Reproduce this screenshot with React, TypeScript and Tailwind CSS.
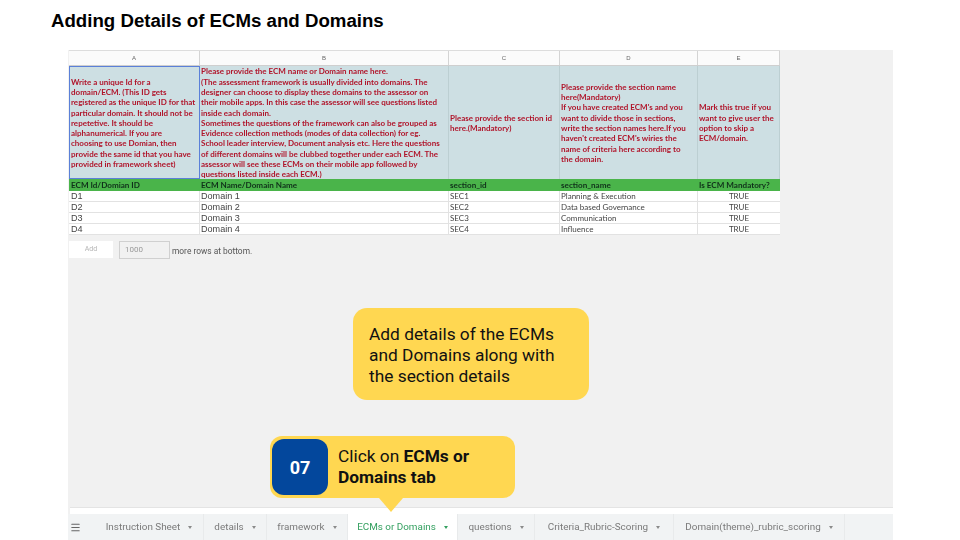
import React from 'react';
import { Menu } from 'lucide-react';

const columns = [
    { letter: 'A', width: 'w-[131px]' },
    { letter: 'B', width: 'w-[249px]' },
    { letter: 'C', width: 'w-[111px]' },
    { letter: 'D', width: 'w-[138px]' },
    { letter: 'E', width: 'w-[82px]' },
];

const notes = [
    ['Write a unique Id for a', 'domain/ECM. (This ID gets', 'registered as the unique ID for that', 'particular domain. It should not be', 'repetetive. It should be', 'alphanumerical. If you are', 'choosing to use Domian, then', 'provide the same id that you have', 'provided in framework sheet)'],
    ['Please provide the ECM name or Domain name here.', '(The assessment framework is usually divided into domains. The', 'designer can choose to display these domains to the assessor on', 'their mobile apps. In this case the assessor will see questions listed', 'inside each domain.', 'Sometimes the questions of the framework can also be grouped as', 'Evidence collection methods (modes of data collection) for eg.', 'School leader interview, Document analysis etc. Here the questions', 'of different domains will be clubbed together under each ECM. The', 'assessor will see these ECMs on their mobile app followed by', 'questions listed inside each ECM.)'],
    ['Please provide the section id', 'here.(Mandatory)'],
    ['Please provide the section name', 'here(Mandatory)', "If you have created ECM's and you", 'want to divide those in sections,', 'write the section names here.If you', "haven't created ECM's wiries the", 'name of criteria here according to', 'the domain.'],
    ['Mark this true if you', 'want to give user the', 'option to skip a', 'ECM/domain.'],
];

const headers = ['ECM Id/Domian ID', 'ECM Name/Domain Name', 'section_id', 'section_name', 'Is ECM Mandatory?'];

const rows = [
    ['D1', 'Domain 1', 'SEC1', 'Planning & Execution'],
    ['D2', 'Domain 2', 'SEC2', 'Data based Governance'],
    ['D3', 'Domain 3', 'SEC3', 'Communication'],
    ['D4', 'Domain 4', 'SEC4', 'Influence'],
];

const tabs = [
    { name: 'Instruction Sheet', width: 'w-[109px]' },
    { name: 'details', width: 'w-[63px]' },
    { name: 'framework', width: 'w-[81px]' },
    { name: 'ECMs or Domains', width: 'w-[110px]', active: true },
    { name: 'questions', width: 'w-[77px]' },
    { name: 'Criteria_Rubric-Scoring', width: 'w-[139px]' },
    { name: 'Domain(theme)_rubric_scoring', width: 'w-[171px]' },
];

const Sheet: React.FC = () => (
    <div className="w-[711px] ml-px blur-[0.4px] font-['Lato',sans-serif]">
        {/* Column letters */}
        <div className="flex h-[16px] bg-[#fbfbfb] border-t border-[#dddddd] border-b border-b-[#cfcfcf]">
            {columns.map((c) => (
                <div key={c.letter} className={`${c.width} border-r border-[#d4d4d4] flex items-center justify-center text-[6px] text-[#666666] font-['Liberation_Sans',sans-serif]`}>
                    {c.letter}
                </div>
            ))}
        </div>

        {/* Instruction row */}
        <div className="flex h-[113px] bg-[#cddfe3]">
            {columns.map((c, i) => (
                <div
                    key={c.letter}
                    className={`${c.width} flex flex-col justify-center pt-[1px] pl-[1px] text-[8px] leading-[10.3px] font-bold text-[#b0142a] whitespace-nowrap border-r ${i === 0 ? 'border border-[#5b80d8]' : 'border-[#bccfd2]'}`}
                >
                    {notes[i].map((line) => <div key={line}>{line}</div>)}
                </div>
            ))}
        </div>

        {/* Field names */}
        <div className="flex h-[12px] bg-[#4ab44a]">
            {headers.map((h, i) => (
                <div key={h} className={`${columns[i].width} ${i === 0 ? 'pl-[2px]' : 'pl-[1px]'} text-[8.1px] leading-[13px] font-bold text-[#10301a] whitespace-nowrap`}>
                    {h}
                </div>
            ))}
        </div>

        {/* Data rows */}
        {rows.map((r) => (
            <div key={r[0]} className="flex h-[11px] bg-white border-b border-[#e2e2e2] text-[#444444] leading-[11px]">
                <div className="w-[131px] pl-[2px] border-r border-[#e2e2e2] text-[9.1px] font-['Liberation_Sans',sans-serif]">{r[0]}</div>
                <div className="w-[249px] pl-[1px] border-r border-[#e2e2e2] text-[9.1px] font-['Liberation_Sans',sans-serif]">{r[1]}</div>
                <div className="w-[111px] pl-[1px] border-r border-[#e2e2e2] text-[8px]">{r[2]}</div>
                <div className="w-[138px] pl-[1px] border-r border-[#e2e2e2] text-[8px]">{r[3]}</div>
                <div className="w-[82px] text-center text-[8px]">TRUE</div>
            </div>
        ))}

        {/* Add rows */}
        <div className="flex items-center mt-[6px] h-[17px] font-['Roboto',sans-serif]">
            <div className="w-[44px] h-[17px] bg-white flex items-center justify-center text-[7px] text-[#b5b5b5]">Add</div>
            <div className="ml-[6px] w-[51px] h-[18px] border border-[#d0d0d0] flex items-center px-[5px] text-[8px] text-[#9a9a9a]">1000</div>
            <div className="ml-[2px] pt-[3px] text-[8.4px] text-[#555555] whitespace-nowrap">more rows at bottom.</div>
        </div>
    </div>
);

const TabBar: React.FC = () => (
    <div className="mt-auto">
        <div className="h-[7px] ml-[2px] bg-white border-t border-[#e4e4e4]" />
        <div className="h-[26px] flex bg-[#f1f3f4] font-['Roboto',sans-serif] blur-[0.3px]">
            <div className="w-[27px] flex items-center pl-[2px] text-[#666666]">
                <Menu size={11} strokeWidth={2.5} />
            </div>
            {tabs.map((t) => (
                <div
                    key={t.name}
                    className={`${t.width} flex items-center justify-center gap-[8px] text-[9.9px] border-r border-[#e8eaeb] whitespace-nowrap ${t.active ? 'bg-white text-[#34a060]' : 'text-[#7a7a7a]'}`}
                >
                    {t.name}
                    <span className={`w-0 h-0 border-x-[2.5px] border-x-transparent border-t-[3px] ${t.active ? 'border-t-[#34a060]' : 'border-t-[#8a8a8a]'}`} />
                </div>
            ))}
        </div>
    </div>
);

const App: React.FC = () => {
    return (
        <div className="w-[960px] h-[540px] bg-white flex flex-col overflow-hidden relative">
            <h1 className="h-[50px] pl-[51px] pt-[10px] text-[18.67px] leading-[22px] font-bold text-black font-['Liberation_Sans',sans-serif]">
                Adding Details of ECMs and Domains
            </h1>

            <div className="flex-1 ml-[68px] w-[825px] bg-[#f1f1f1] flex flex-col">
                <Sheet />
                <TabBar />
            </div>

            {/* Note callout */}
            <div className="absolute left-[353px] top-[308px] w-[236px] h-[92px] rounded-[14px] bg-[#ffd751] pl-[16px] pt-[2px] flex flex-col justify-center text-[17.33px] leading-[21px] text-[#111111] font-['Roboto',sans-serif]">
                <div>Add details of the ECMs</div>
                <div>and Domains along with</div>
                <div>the section details</div>
            </div>

            {/* Step callout */}
            <div className="absolute left-[270px] top-[436px] w-[245px] h-[62px] rounded-[12px] bg-[#ffd751] flex items-center pl-[2px] font-['Roboto',sans-serif]">
                <div className="w-[56px] h-[56px] rounded-[12px] bg-[#03479c] flex items-center justify-center text-white text-[18px] font-bold">07</div>
                <div className="ml-[10px] text-[17.33px] leading-[21px] text-[#111111]">
                    Click on <b>ECMs or</b><br /><b>Domains tab</b>
                </div>
                <span className="absolute left-[109px] top-[62px] w-0 h-0 border-x-[12px] border-x-transparent border-t-[14px] border-t-[#ffd751]" />
            </div>
        </div>
    );
};

export default App;
